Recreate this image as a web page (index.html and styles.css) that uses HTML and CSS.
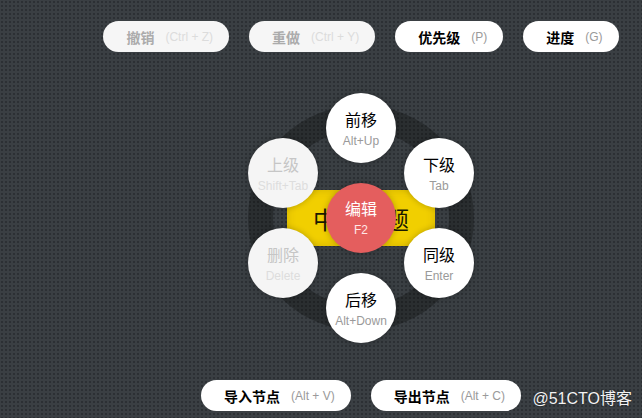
FILE: index.html
```html
<!DOCTYPE html>
<html lang="zh">
<head>
<meta charset="utf-8">
<title>Hotbox</title>
<link rel="stylesheet" href="styles.css">
</head>
<body>
<div class="page">
  <div class="bar bar-top">
    <div class="pill disabled"><span class="label">撤销</span><span class="key">(Ctrl + Z)</span></div>
    <div class="pill disabled"><span class="label">重做</span><span class="key">(Ctrl + Y)</span></div>
    <div class="pill"><span class="label">优先级</span><span class="key">(P)</span></div>
    <div class="pill"><span class="label">进度</span><span class="key">(G)</span></div>
  </div>

  <div class="hotbox">
    <div class="ring"></div>
    <div class="topic"><span>中心主题</span></div>
    <div class="node n-top"><span class="nlabel">前移</span><span class="nkey">Alt+Up</span></div>
    <div class="node n-tr"><span class="nlabel">下级</span><span class="nkey">Tab</span></div>
    <div class="node n-br"><span class="nlabel">同级</span><span class="nkey">Enter</span></div>
    <div class="node n-bot"><span class="nlabel">后移</span><span class="nkey">Alt+Down</span></div>
    <div class="node n-bl disabled"><span class="nlabel">删除</span><span class="nkey">Delete</span></div>
    <div class="node n-tl disabled"><span class="nlabel">上级</span><span class="nkey">Shift+Tab</span></div>
    <div class="node n-center"><span class="nlabel">编辑</span><span class="nkey">F2</span></div>
  </div>

  <div class="bar bar-bottom">
    <div class="pill"><span class="label">导入节点</span><span class="key">(Alt + V)</span></div>
    <div class="pill"><span class="label">导出节点</span><span class="key">(Alt + C)</span></div>
  </div>

  <div class="watermark">@51CTO博客</div>
</div>
</body>
</html>
```

FILE: styles.css
```css
html, body {
  margin: 0;
  padding: 0;
}

body {
  width: 642px;
  height: 418px;
  overflow: hidden;
  font-family: "Liberation Sans", "Noto Sans CJK SC", sans-serif;
  background-color: #3a3f43;
  background-image: radial-gradient(circle, #2c3034 0.9px, transparent 1.3px);
  background-size: 4px 4px;
  background-position: 0 0;
}

.page {
  position: relative;
  width: 642px;
  height: 418px;
  box-sizing: border-box;
  padding-left: 80px;
  display: flex;
  flex-direction: column;
  align-items: center;
}

.bar {
  display: flex;
  justify-content: center;
  gap: 20px;
}

.bar-top {
  margin-top: 21px;
}

.bar-bottom {
  margin-top: 32px;
}

.pill {
  height: 31px;
  box-sizing: border-box;
  border-radius: 16px;
  background: #ffffff;
  padding: 0 16px 0 23px;
  display: flex;
  align-items: center;
  gap: 11px;
  white-space: nowrap;
}

.pill .label {
  font-size: 14px;
  font-weight: bold;
  color: #000;
}

.pill .key {
  font-size: 12px;
  color: #9a9a9a;
}

.pill.disabled {
  background: #f6f6f6;
}

.pill.disabled .label {
  color: #ababab;
}

.pill.disabled .key {
  color: #dcdcdc;
}

.hotbox {
  position: relative;
  width: 260px;
  height: 260px;
  margin-top: 36px;
}

.ring {
  position: absolute;
  left: 17px;
  top: 17px;
  width: 176px;
  height: 176px;
  border: 25px solid rgba(0, 0, 0, 0.27);
  border-radius: 50%;
}

.topic {
  position: absolute;
  left: 56px;
  top: 102px;
  width: 148px;
  height: 56px;
  background: #f1cf00;
  box-shadow: inset 0 0 8px rgba(120, 90, 0, 0.25);
  display: flex;
  align-items: center;
  justify-content: center;
}

.topic span {
  font-size: 24px;
  color: #1a1a00;
  font-family: "Noto Sans CJK SC", sans-serif;
}

.node {
  position: absolute;
  width: 70px;
  height: 70px;
  box-sizing: border-box;
  padding-top: 3px;
  border-radius: 50%;
  background: #ffffff;
  box-shadow: 0 0 6px rgba(0, 0, 0, 0.25);
  display: flex;
  flex-direction: column;
  align-items: center;
  justify-content: center;
}

.nlabel {
  font-size: 16px;
  line-height: 22px;
  color: #000;
}

.nkey {
  font-size: 12px;
  line-height: 16px;
  margin-top: 1px;
  color: #9a9a9a;
}

.node.disabled {
  background: #f5f5f5;
}

.node.disabled .nlabel {
  color: #c6c6c6;
}

.node.disabled .nkey {
  color: #dddddd;
}

.n-top { left: 95px; top: 5px; }
.n-tr { left: 173px; top: 50px; }
.n-br { left: 173px; top: 140px; }
.n-bot { left: 95px; top: 185px; }
.n-bl { left: 17px; top: 140px; }
.n-tl { left: 17px; top: 50px; }

.n-center {
  left: 95px;
  top: 95px;
  padding-top: 0;
  background: #e45e5e;
}

.n-center .nlabel {
  color: #ffffff;
}

.n-center .nkey {
  color: #ffe6e6;
}

.watermark {
  position: absolute;
  right: 10px;
  bottom: 9px;
  font-size: 16px;
  color: #f2f2f2;
  text-shadow: 0 0 2px rgba(0, 0, 0, 0.4);
}
```
